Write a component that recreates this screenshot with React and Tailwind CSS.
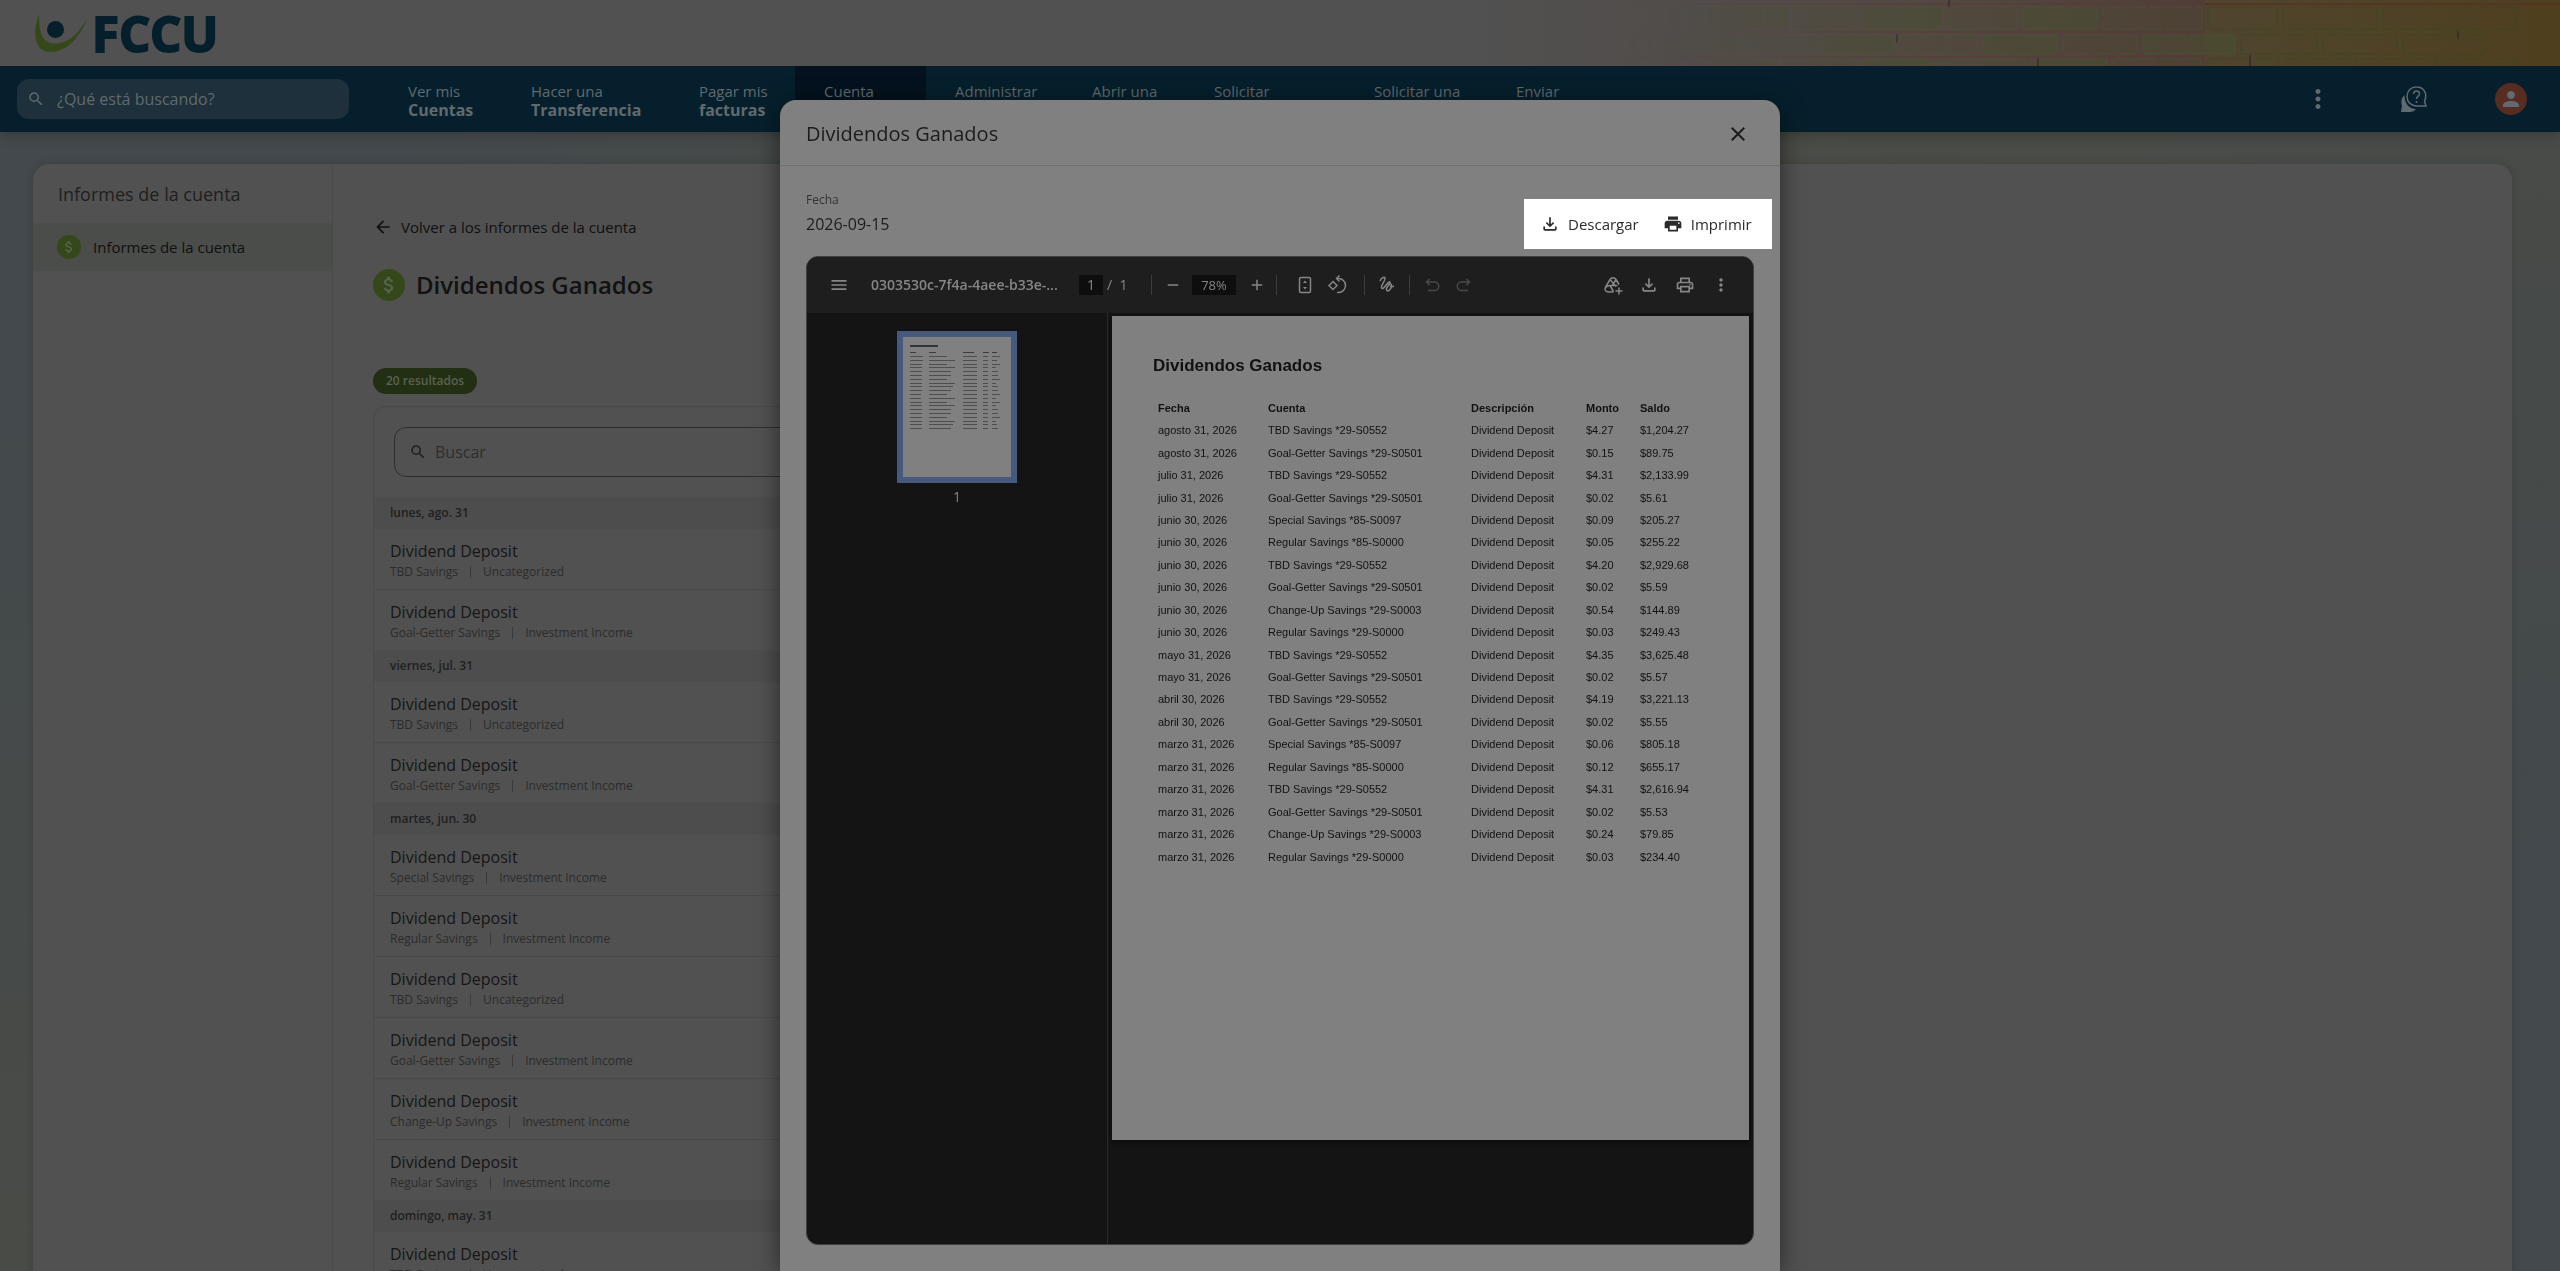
import {
  MdAdd,
  MdArrowBack,
  MdAttachMoney,
  MdClose,
  MdMenu,
  MdMoreVert,
  MdOutlineFileDownload,
  MdOutlinePrint,
  MdPerson,
  MdPrint,
  MdRemove,
  MdSearch,
} from 'react-icons/md';

// ── Data ──
const NAV_ITEMS = [
  { top: 'Ver mis', bottom: 'Cuentas',       width: 'w-[123px]' },
  { top: 'Hacer una', bottom: 'Transferencia', width: 'w-[168px]' },
  { top: 'Pagar mis', bottom: 'facturas',    width: 'w-[125px]' },
  { top: 'Cuenta', width: 'w-[131px]', active: true },
  { top: 'Administrar', width: 'w-[137px]' },
  { top: 'Abrir una', width: 'w-[122px]' },
  { top: 'Solicitar', width: 'w-[160px]' },
  { top: 'Solicitar una', width: 'w-[142px]' },
  { top: 'Enviar', width: 'w-[124px]' },
];

const GROUPS = [
  {
    day: 'lunes, ago. 31',
    rows: [
      ['TBD Savings', 'Uncategorized'],
      ['Goal-Getter Savings', 'Investment Income'],
    ],
  },
  {
    day: 'viernes, jul. 31',
    rows: [
      ['TBD Savings', 'Uncategorized'],
      ['Goal-Getter Savings', 'Investment Income'],
    ],
  },
  {
    day: 'martes, jun. 30',
    rows: [
      ['Special Savings', 'Investment Income'],
      ['Regular Savings', 'Investment Income'],
      ['TBD Savings', 'Uncategorized'],
      ['Goal-Getter Savings', 'Investment Income'],
      ['Change-Up Savings', 'Investment Income'],
      ['Regular Savings', 'Investment Income'],
    ],
  },
  {
    day: 'domingo, may. 31',
    rows: [['TBD Savings', 'Uncategorized']],
  },
];

const DIVIDENDS = [
  ['agosto 31, 2026', 'TBD Savings *29-S0552', '$4.27', '$1,204.27'],
  ['agosto 31, 2026', 'Goal-Getter Savings *29-S0501', '$0.15', '$89.75'],
  ['julio 31, 2026', 'TBD Savings *29-S0552', '$4.31', '$2,133.99'],
  ['julio 31, 2026', 'Goal-Getter Savings *29-S0501', '$0.02', '$5.61'],
  ['junio 30, 2026', 'Special Savings *85-S0097', '$0.09', '$205.27'],
  ['junio 30, 2026', 'Regular Savings *85-S0000', '$0.05', '$255.22'],
  ['junio 30, 2026', 'TBD Savings *29-S0552', '$4.20', '$2,929.68'],
  ['junio 30, 2026', 'Goal-Getter Savings *29-S0501', '$0.02', '$5.59'],
  ['junio 30, 2026', 'Change-Up Savings *29-S0003', '$0.54', '$144.89'],
  ['junio 30, 2026', 'Regular Savings *29-S0000', '$0.03', '$249.43'],
  ['mayo 31, 2026', 'TBD Savings *29-S0552', '$4.35', '$3,625.48'],
  ['mayo 31, 2026', 'Goal-Getter Savings *29-S0501', '$0.02', '$5.57'],
  ['abril 30, 2026', 'TBD Savings *29-S0552', '$4.19', '$3,221.13'],
  ['abril 30, 2026', 'Goal-Getter Savings *29-S0501', '$0.02', '$5.55'],
  ['marzo 31, 2026', 'Special Savings *85-S0097', '$0.06', '$805.18'],
  ['marzo 31, 2026', 'Regular Savings *85-S0000', '$0.12', '$655.17'],
  ['marzo 31, 2026', 'TBD Savings *29-S0552', '$4.31', '$2,616.94'],
  ['marzo 31, 2026', 'Goal-Getter Savings *29-S0501', '$0.02', '$5.53'],
  ['marzo 31, 2026', 'Change-Up Savings *29-S0003', '$0.24', '$79.85'],
  ['marzo 31, 2026', 'Regular Savings *29-S0000', '$0.03', '$234.40'],
];

// ── Small drawings ──
function LogoMark() {
  return (
    <svg viewBox="0 0 53 38" className="w-[53px] h-[38px]" aria-hidden="true">
      <path
        d="M4 0C1 8-1 18 1 26c2 8 7 12 15 12C31 38 45 24 53 3 45 17 36 29 21 29.500 8 29.500 4 22 4 0Z"
        fill="#34481a"
      />
      <circle cx="20.500" cy="15.500" r="8.500" fill="#05202c" />
    </svg>
  );
}

// joints of each brick course, as x positions
const COURSES = [
  { y: 7,  h: 22, joints: [70, 170, 245, 330, 400, 485, 560, 640, 745, 820, 920, 1060] },
  { y: 35, h: 19, joints: [30, 130, 195, 280, 360, 437, 520, 600, 680, 778, 860, 940, 1030] },
  { y: 59, h: 20, joints: [85, 160, 240, 320, 400, 475, 575, 650, 745, 822, 900, 980, 1060] },
];

function BrickWall() {
  return (
    <svg
      viewBox="0 0 1100 66"
      preserveAspectRatio="xMaxYMid slice"
      className="w-[1100px] h-[66px]"
      aria-hidden="true"
    >
      <defs>
        <linearGradient id="wall">
          <stop offset="0"    stopColor="#515151" />
          <stop offset="0.25" stopColor="#524c49" />
          <stop offset="0.45" stopColor="#534741" />
          <stop offset="0.67" stopColor="#503e37" />
        </linearGradient>
        <linearGradient id="ochre">
          <stop offset="0" stopColor="#4f452f" />
          <stop offset="1" stopColor="#4e3f1e" />
        </linearGradient>
        <linearGradient id="fade" gradientUnits="userSpaceOnUse" x1="0" x2="1100" y1="0" y2="0">
          <stop offset="0.15" stopColor="#fff" stopOpacity="0" />
          <stop offset="0.45" stopColor="#fff" />
        </linearGradient>
        <mask id="fadeMask" maskUnits="userSpaceOnUse" x="0" y="0" width="1100" height="66">
          <rect width="1100" height="66" fill="url(#fade)" />
        </mask>
      </defs>
      <rect width="1100" height="66" fill="url(#wall)" />
      <rect x="745" width="355" height="66" fill="url(#ochre)" />
      <g mask="url(#fadeMask)">
        <path d="M0 4H745M0 32H745M0 57H745" stroke="#5a3838" strokeWidth="2" opacity="0.5" />
        <path d="M745 4H1100" stroke="#5a2f25" strokeWidth="2" opacity="0.7" />
        {COURSES.map(({ y, h, joints }) =>
          joints.slice(0, -1).map((x, i) => (
            <rect
              key={`${y}-${x}`}
              x={x + 3}
              y={y}
              width={joints[i + 1] - x - 6}
              height={h}
              rx="1"
              fill="#46502f"
              fillOpacity={x > 740 ? 0 : i % 2 ? 0.2 : 0.5}
              stroke={x > 740 ? '#3b4a1c' : '#44582f'}
              strokeDasharray="17 3 22 4"
              strokeOpacity="0.8"
            />
          ))
        )}
        <path d="M489 0v7M437 34v9M578 58v8M790 55v11M998 31v8" stroke="#2c2128" />
      </g>
    </svg>
  );
}

function HelpIcon() {
  return (
    <svg viewBox="0 0 26 26" className="w-[26px] h-[26px]" fill="none" stroke="currentColor" aria-hidden="true">
      <path d="M15.500 1A9 9.500 0 0 0 6 10.500C6 16 10 20 15.500 20h9.500l-1.500-4.500C27 7 22.500 1 15.500 1Z" strokeWidth="1.500" />
      <path d="M12.500 8c0-4 6-4 6-.3 0 2.500-3 2.300-3 5.300" strokeWidth="1.500" />
      <circle cx="15.500" cy="16" r="1" fill="currentColor" stroke="none" />
      <path d="M3.500 9C-.5 13 0 17 1 19.500L0 26h9c2.500 0 4.500-1.200 6-3C8 23 3.500 17.500 3.500 9Z" fill="currentColor" stroke="none" />
    </svg>
  );
}

function PdfIcon({ children }) {
  return (
    <svg
      viewBox="0 0 20 20"
      className="w-5 h-5"
      fill="none"
      stroke="currentColor"
      strokeWidth="1.500"
      aria-hidden="true"
    >
      {children}
    </svg>
  );
}

function Thumbnail() {
  return (
    <svg viewBox="0 0 108 140" className="w-[108px] h-[140px]" aria-hidden="true">
      <rect width="108" height="140" fill="#808080" />
      <rect x="7" y="8" width="28" height="2" fill="#222" opacity="0.8" />
      {[[7, 6], [26, 7], [60, 11], [80, 6], [89, 5]].map(([x, w]) => (
        <rect key={x} x={x} y="15" width={w} height="1" fill="#2a2a2a" opacity="0.8" />
      ))}
      {DIVIDENDS.map(([date, account, , balance], i) => {
        const y = 19 + Math.round(i * 3.8);
        return (
          <g key={i} fill="#3a3a3a" opacity="0.7">
            <rect x="7" y={y} width={date.length - 2} height="1" />
            <rect x="26" y={y} width={Math.round(account.length * 0.88)} height="1" />
            <rect x="60" y={y} width="14" height="1" />
            <rect x="80" y={y} width="5" height="1" />
            <rect x="89" y={y} width={balance.length - 1} height="1" />
          </g>
        );
      })}
    </svg>
  );
}

// ── Page header ──
function Header() {
  return (
    <header className="relative shadow-[0_2px_12px_rgba(0,0,0,0.25)]">
      <div className="h-[66px] bg-[#515151] flex items-center overflow-hidden">
        <a href="#inicio" className="flex items-center gap-1 pl-[35px]">
          <LogoMark />
          <span className="text-[49px] leading-[66px] font-bold text-[#05202c]
                           [-webkit-text-stroke:2px_#05202c]">
            FCCU
          </span>
        </a>
        <div className="ml-auto"><BrickWall /></div>
      </div>

      <nav className="h-[66px] bg-[#05202c] text-[#616a6e] flex">
        <label className="flex items-center gap-3 self-center ml-[17px] mr-[30px] w-[332px] h-10
                          px-[10px] rounded-xl bg-[#1d303b]">
          <MdSearch size={18} aria-label="Buscar" />
          <input
            type="search"
            placeholder="¿Qué está buscando?"
            className="flex-1 min-w-0 bg-transparent text-base outline-none placeholder:text-[#616a6e]"
          />
        </label>

        {NAV_ITEMS.map(({ top, bottom, width, active }) => (
          <a
            key={top}
            href="#menu"
            className={`${width} shrink-0 pl-[29px] pt-4 text-[15px] leading-[19px] whitespace-nowrap
                        ${active ? 'bg-[#04121f]' : ''}`}
          >
            <span className="block">{top}</span>
            {bottom && <span className="block text-base leading-[18px] font-bold">{bottom}</span>}
          </a>
        ))}

        <div className="ml-auto flex items-center pr-[33px]">
          <button type="button" aria-label="Más opciones" className="mr-[68px]">
            <MdMoreVert size={30} />
          </button>
          <button type="button" aria-label="Ayuda" className="mr-[68px]">
            <HelpIcon />
          </button>
          <button
            type="button"
            aria-label="Perfil"
            className="w-8 h-8 rounded-full bg-[#572c21] flex items-center justify-center"
          >
            <MdPerson size={24} />
          </button>
        </div>
      </nav>
    </header>
  );
}

// ── Account reports ──
function Sidebar() {
  return (
    <aside className="w-[300px] shrink-0 border-r border-[#494949]">
      <h2 className="pl-[25px] h-[59px] flex items-center text-lg font-medium text-[#1f1f1f]">
        Informes de la cuenta
      </h2>
      <a
        href="#informes"
        className="flex items-center gap-3 h-12 pl-6 bg-[#4a4d49] text-[15px] font-medium text-[#101010]"
      >
        <span className="w-6 h-6 rounded-full bg-[#34481a] text-[#5c6450] flex items-center justify-center">
          <MdAttachMoney size={16} />
        </span>
        Informes de la cuenta
      </a>
    </aside>
  );
}

function ResultRow({ account, category }) {
  return (
    <li className="px-4 pt-[10px] h-[61px] last:h-[60px] border-b last:border-b-0 border-[#494949]">
      <p className="text-base leading-6 text-[#161616]">Dividend Deposit</p>
      <p className="flex items-center text-xs leading-[18px] text-[#2c2c2c]">
        {account}
        <span className="w-px h-3 mx-3 bg-[#3a3a3a]" />
        {category}
      </p>
    </li>
  );
}

function Report() {
  return (
    <main className="flex-1 pt-[51px] pl-10 pr-10">
      <a href="#volver" className="flex items-center gap-2 w-fit text-[15px] leading-6 font-medium text-[#101010]">
        <MdArrowBack size={20} />
        Volver a los informes de la cuenta
      </a>

      <div className="flex items-center gap-[11px] mt-[30px]">
        <span className="w-8 h-8 rounded-full bg-[#34481a] text-[#5c6450] flex items-center justify-center">
          <MdAttachMoney size={22} />
        </span>
        <h1 className="text-2xl font-semibold text-[#121212]">Dividendos Ganados</h1>
      </div>

      <p className="mt-[67px] w-fit h-[26px] px-[13px] flex items-center rounded-full bg-[#222f13]
                    text-xs font-semibold text-[#5a6250]">
        20 resultados
      </p>

      <section className="mt-3 max-w-[1200px] border border-[#494949] rounded-xl">
        <div className="p-5">
          <label className="flex items-center gap-2 h-[50px] px-[14px] rounded-xl border border-[#2e2e2e]
                            text-[#1f1f1f]">
            <MdSearch size={18} aria-label="Buscar" />
            <input
              type="search"
              placeholder="Buscar"
              className="flex-1 min-w-0 bg-transparent text-base outline-none placeholder:text-[#2e2e2e]"
            />
          </label>
        </div>

        {GROUPS.map(({ day, rows }) => (
          <div key={day}>
            <h3 className="h-8 px-4 flex items-center bg-[#4d4d4d] text-xs font-semibold text-[#202020]">
              {day}
            </h3>
            <ul>
              {rows.map(([account, category], i) => (
                <ResultRow key={i} account={account} category={category} />
              ))}
            </ul>
          </div>
        ))}
      </section>
    </main>
  );
}

// ── PDF viewer ──
function Divider({ className = '' }) {
  return <span className={`w-px h-5 bg-[#3d3d3d] ${className}`} />;
}

function PdfToolbar() {
  return (
    <div className="h-14 flex items-center px-[22px] bg-[#1e1e1e] text-sm text-[#868686]">
      <button type="button" aria-label="Menú"><MdMenu size={20} /></button>
      <span className="ml-[22px] w-[208px] font-semibold whitespace-nowrap">0303530c-7f4a-4aee-b33e-...</span>
      <div className="w-[72px] flex items-center">
        <input
          aria-label="Página"
          defaultValue="1"
          className="w-6 h-5 bg-[#0e0e0e] text-center outline-none"
        />
        <span className="ml-1 whitespace-pre">/  1</span>
      </div>

      <Divider />
      <button type="button" aria-label="Alejar" className="ml-3 mr-[10px]"><MdRemove size={18} /></button>
      <input
        aria-label="Zoom"
        defaultValue="78%"
        className="w-11 h-5 bg-[#0e0e0e] text-center text-[13px] outline-none"
      />
      <button type="button" aria-label="Acercar" className="ml-3 mr-[10px]"><MdAdd size={18} /></button>
      <Divider />

      <button type="button" aria-label="Ajustar a la página" className="ml-[18px]">
        <PdfIcon>
          <rect x="4.500" y="2.500" width="11" height="15" rx="1.500" />
          <path d="M8 8l2-2.500L12 8ZM8 12l2 2.500 2-2.500Z" fill="currentColor" stroke="none" />
        </PdfIcon>
      </button>
      <button type="button" aria-label="Girar" className="ml-3">
        <PdfIcon>
          <path d="M6 6.500L10 10.500 6 14.500 2 10.500Z" />
          <path d="M10 3.500h1.500a7 7 0 0 1 0 14H10" />
          <path d="M12.500.5L9.500 3.500l3 3" />
        </PdfIcon>
      </button>
      <Divider className="ml-[17px]" />

      <button type="button" aria-label="Dibujar" className="ml-3">
        <PdfIcon>
          <path d="M3 6c1-3 4-4.500 5-3s-4 7-3.500 9.500 3 0 5-3 4-3.500 3.500-1.500-4.500 4.500-3.500 7 4.500-.5 5-3.500-2-3-3.500-1.500M13 11.500h4" />
        </PdfIcon>
      </button>
      <Divider className="ml-3" />

      <button type="button" aria-label="Deshacer" disabled className="ml-3 text-[#484848]">
        <PdfIcon><path d="M7.500 4L4.500 7l3 3M5 7h7.500a4 4 0 0 1 0 8.500H6" /></PdfIcon>
      </button>
      <button type="button" aria-label="Rehacer" disabled className="ml-3 text-[#484848]">
        <PdfIcon><path d="M12.500 4l3 3-3 3M15 7H7.500a4 4 0 0 0 0 8.500H14" /></PdfIcon>
      </button>

      <div className="ml-auto flex items-center gap-4">
        <button type="button" aria-label="Guardar en Drive">
          <PdfIcon>
            <path d="M7 4.500C8.500 2 11.500 2 13 4.500l3 5M7 4.500L2.500 12c-1.500 3 .5 5 3 5h5M7 4.500l6 7M13 4.500L9 11M2.500 13c1-2 3-2.500 5-2.500h7M7 10.500l3.500 6" />
            <path d="M16 12.500v7M12.500 16h7" />
          </PdfIcon>
        </button>
        <button type="button" aria-label="Descargar PDF"><MdOutlineFileDownload size={20} /></button>
        <button type="button" aria-label="Imprimir PDF"><MdOutlinePrint size={20} /></button>
        <button type="button" aria-label="Más acciones"><MdMoreVert size={20} /></button>
      </div>
    </div>
  );
}

function PdfPage() {
  return (
    <article className="mx-1 mt-[3px] flex-1 h-[824px] pl-[41px] pr-10 pt-[38px] bg-[#808080] text-[#111]
                        font-['Liberation_Sans',Arial,sans-serif] shadow-[0_2px_5px_rgba(0,0,0,0.5)]">
      <h2 className="text-[17px] leading-6 font-bold">Dividendos Ganados</h2>
      <table className="mt-[19px] w-full h-[471px] table-fixed text-left text-[11px] leading-4">
        <colgroup>
          <col className="w-[110px]" />
          <col className="w-[203px]" />
          <col className="w-[115px]" />
          <col className="w-[54px]" />
          <col />
        </colgroup>
        <thead>
          <tr className="h-[22px]">
            {['Fecha', 'Cuenta', 'Descripción', 'Monto', 'Saldo'].map((name) => (
              <th key={name} scope="col" className="pl-[5px] font-bold">{name}</th>
            ))}
          </tr>
        </thead>
        <tbody>
          {DIVIDENDS.map(([date, account, amount, balance], i) => (
            <tr key={i}>
              <td className="pl-[5px]">{date}</td>
              <td className="pl-[5px]">{account}</td>
              <td className="pl-[5px]">Dividend Deposit</td>
              <td className="pl-[5px]">{amount}</td>
              <td className="pl-[5px]">{balance}</td>
            </tr>
          ))}
        </tbody>
      </table>
    </article>
  );
}

function PdfViewer() {
  return (
    <div className="rounded-xl border border-[#3f3f3f] bg-[#141414] overflow-hidden">
      <PdfToolbar />
      <div className="flex items-start h-[931px]">
        <div className="w-[301px] h-full shrink-0 border-r border-[#2c2c2c] pt-[18px] flex flex-col items-center">
          <button type="button" aria-label="Página 1" className="border-[6px] border-[#465a7f]">
            <Thumbnail />
          </button>
          <span className="mt-1 text-sm text-[#868686]">1</span>
        </div>
        <PdfPage />
      </div>
    </div>
  );
}

// ── Modal ──
function ReportModal() {
  return (
    <div className="absolute inset-0 pt-[100px] flex justify-center items-start">
      <div
        role="dialog"
        aria-label="Dividendos Ganados"
        className="w-[1000px] rounded-t-2xl bg-[#808080] text-[#1c1c1c] shadow-[0_4px_24px_rgba(0,0,0,0.5)]"
      >
        <div className="h-[66px] pt-[2px] pl-[26px] pr-[30px] flex items-center justify-between border-b border-[#707070]">
          <h2 className="text-xl font-medium">Dividendos Ganados</h2>
          <button type="button" aria-label="Cerrar"><MdClose size={24} /></button>
        </div>

        <div className="flex items-start justify-between pt-[25px] pb-[7px] pl-[26px] pr-2">
          <dl>
            <dt className="text-xs leading-[18px] text-[#333]">Fecha</dt>
            <dd className="mt-[3px] text-base leading-6">2026-09-15</dd>
          </dl>
          <div className="mt-2 h-[50px] w-[248px] bg-white text-[#2b2b2b] flex items-center pl-4 gap-6
                          text-[15px] font-medium">
            <button type="button" className="flex items-center gap-2">
              <MdOutlineFileDownload size={20} />
              Descargar
            </button>
            <button type="button" className="flex items-center gap-2">
              <MdPrint size={20} />
              Imprimir
            </button>
          </div>
        </div>

        <div className="px-[26px] pb-[26px]">
          <PdfViewer />
        </div>
      </div>
    </div>
  );
}

export default function App() {
  return (
    <div className="relative h-screen overflow-hidden font-['Open_Sans','Noto_Sans',sans-serif]
                    bg-[#4a4c45] bg-[radial-gradient(circle_at_0%_0%,#43494c_15%,transparent_50%),radial-gradient(circle_at_100%_100%,#43494c_15%,transparent_50%)]">
      <Header />
      <div className="mt-8 ml-[33px] mr-12 min-h-screen flex rounded-t-2xl bg-[#515151]
                      shadow-[0_0_8px_rgba(0,0,0,0.15)]">
        <Sidebar />
        <Report />
      </div>
      <ReportModal />
    </div>
  );
}
